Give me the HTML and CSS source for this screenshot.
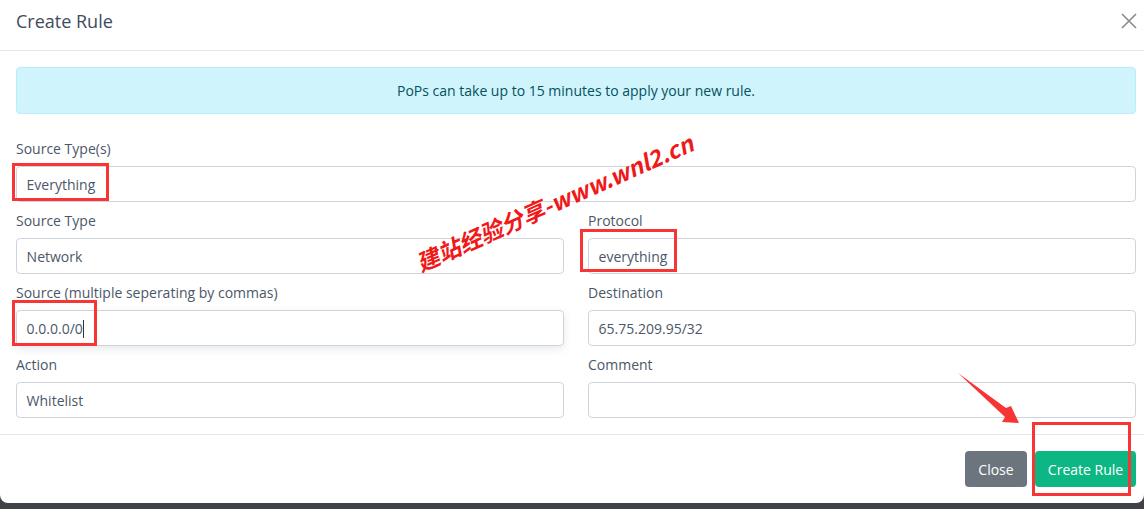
FILE: index.html
```html
<!DOCTYPE html>
<html lang="en">
<head>
<meta charset="utf-8">
<title>Create Rule</title>
<link rel="stylesheet" href="styles.css">
</head>
<body>
<div class="modal">
  <header class="modal-header">
    <h5 class="modal-title">Create Rule</h5>
    <svg class="close-icon" width="16" height="16" viewBox="0 0 16 16"><path d="M1 1 L15 15 M15 1 L1 15"/></svg>
  </header>
  <div class="modal-body">
    <div class="alert">PoPs can take up to 15 minutes to apply your new rule.</div>
    <div class="field">
      <label class="label">Source Type(s)</label>
      <div class="input">Everything</div>
    </div>
    <div class="grid">
      <div class="field">
        <label class="label">Source Type</label>
        <div class="input">Network</div>
      </div>
      <div class="field">
        <label class="label">Protocol</label>
        <div class="input">everything</div>
      </div>
      <div class="field">
        <label class="label">Source (multiple seperating by commas)</label>
        <div class="input focused">0.0.0.0/0<span class="caret"></span></div>
      </div>
      <div class="field">
        <label class="label">Destination</label>
        <div class="input">65.75.209.95/32</div>
      </div>
      <div class="field">
        <label class="label">Action</label>
        <div class="input">Whitelist</div>
      </div>
      <div class="field">
        <label class="label">Comment</label>
        <div class="input"></div>
      </div>
    </div>
  </div>
  <footer class="modal-footer">
    <button class="btn btn-close">Close</button>
    <button class="btn btn-create">Create Rule</button>
  </footer>
</div>
<div class="mark mark-a"></div>
<div class="mark mark-b"></div>
<div class="mark mark-c"></div>
<div class="mark mark-d"></div>
<svg class="arrow" width="70" height="60" viewBox="0 0 70 60"><polygon points="0,0 48,35 53,33 61,50 44,49 47,44"/></svg>
<div class="watermark">建站经验分享-www.wnl2.cn</div>
</body>
</html>
```
FILE: styles.css
```css
* { box-sizing: border-box; }
html, body { margin: 0; height: 509px; overflow: hidden; }
body {
  position: relative;
  background: #3f4247;
  font-family: "Open Sans", sans-serif;
  font-size: 14px;
  color: #4b5768;
}
.modal {
  height: 503px;
  background: #fff;
  border-radius: 0 0 8px 8px;
  display: flex;
  flex-direction: column;
}
.modal-header {
  height: 51px;
  border-bottom: 1px solid #e4e5ec;
  padding: 0 7px 8px 16px;
  display: flex;
  align-items: center;
  justify-content: space-between;
  flex: none;
}
.modal-title {
  margin: 0;
  font-size: 18px;
  font-weight: 400;
  line-height: 24px;
  color: #3e4c5c;
}
.close-icon path { stroke: #8a8a8a; stroke-width: 1.6; fill: none; }
.modal-body { padding: 16px 8px 0 16px; flex: 1; }
.alert {
  height: 47px;
  background: #cff4fc;
  border: 1px solid #b6effb;
  border-radius: 4px;
  color: #055160;
  display: flex;
  align-items: center;
  justify-content: center;
  margin-bottom: 24px;
}
.grid {
  display: grid;
  grid-template-columns: 548px 548px;
  column-gap: 24px;
}
.field { height: 72px; }
.label {
  display: block;
  height: 28px;
  line-height: 21px;
}
.input {
  height: 36px;
  border: 1px solid #ced4da;
  border-radius: 4px;
  padding: 0 9.6px;
  line-height: 36px;
  color: #4b5768;
  background: #fff;
  white-space: nowrap;
}
.focused { box-shadow: 0 3px 8px rgba(60, 70, 90, 0.12); }
.caret {
  display: inline-block;
  width: 1px;
  height: 18px;
  background: #2f3640;
  vertical-align: -4px;
}
.modal-footer {
  height: 69px;
  border-top: 1px solid #e4e5ec;
  padding: 16px 8px 16px 0;
  display: flex;
  justify-content: flex-end;
  gap: 8px;
  flex: none;
}
.btn {
  height: 36px;
  border: 0;
  border-radius: 4px;
  font-family: inherit;
  font-size: 14px;
  color: #fff;
  padding: 0;
}
.btn-close { background: #6c757d; width: 62px; }
.btn-create { background: #0db784; width: 101px; }
.mark {
  position: absolute;
  border: 3px solid #f83535;
}
.mark-a { left: 12px; top: 163px; width: 97px; height: 38px; }
.mark-b { left: 580px; top: 229px; width: 97px; height: 43px; }
.mark-c { left: 12px; top: 300px; width: 85px; height: 46px; }
.mark-d { left: 1032px; top: 422px; width: 99px; height: 74px; }
.arrow { position: absolute; left: 958px; top: 373px; }
.arrow polygon { fill: #f83535; }
.watermark {
  position: absolute;
  left: 404px;
  top: 187px;
  width: 300px;
  font-family: "Noto Sans CJK SC", sans-serif;
  font-size: 23px;
  font-weight: 700;
  font-style: italic;
  line-height: 30px;
  color: #f01818;
  white-space: nowrap;
  transform: rotate(-24deg);
}
```
